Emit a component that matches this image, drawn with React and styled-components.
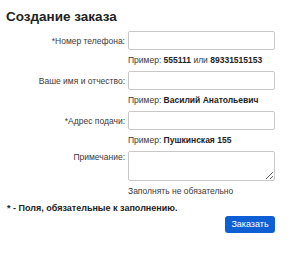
import React from 'react'
import styled, { createGlobalStyle } from 'styled-components'

const GlobalStyle = createGlobalStyle`
body {
  margin: 0;
  background: #fff;
  font-family: "Liberation Sans", Arial, sans-serif;
  color: #333;
}
`

const Page = styled.div`
width: 300px;
padding: 9px 6px 0 6px;
box-sizing: border-box;
`

const Title = styled.h1`
margin: 0 0 6px 0;
font-size: 13.5px;
line-height: 16px;
font-weight: bold;
color: #222;
`

const Form = styled.form`
display: grid;
grid-template-columns: 119px 147px;
column-gap: 3px;
align-items: start;
`

const Label = styled.label`
font-size: 8.5px;
color: #3a3a3a;
display: flex;
justify-content: flex-end;
text-align: right;
height: ${props => props.tall ? '30px' : '19px'};
align-items: ${props => props.tall ? 'flex-start' : 'center'};
padding-top: ${props => props.tall ? '1px' : '0'};
box-sizing: border-box;
line-height: 10px;
`

const Field = styled.div`
display: flex;
flex-direction: column;
`

const Input = styled.input`
box-sizing: border-box;
width: 147px;
height: 19px;
margin: 0;
border: 1px solid #c8c8c8;
border-radius: 2px;
padding: 1px 4px;
font-size: 9px;
font-family: inherit;
`

const Area = styled.textarea`
box-sizing: border-box;
width: 147px;
height: 30px;
margin: 0;
border: 1px solid #c8c8c8;
border-radius: 2px;
padding: 2px 4px;
font-size: 9px;
font-family: inherit;
display: block;
`

const Hint = styled.div`
font-size: 8.5px;
line-height: 13px;
padding-top: 4px;
margin-bottom: 4px;
color: #3a3a3a;
white-space: nowrap;
`

const Strong = styled.b`
color: #222;
`

const Note = styled.div`
grid-column: 1 / span 2;
font-size: 9px;
line-height: 13px;
font-weight: bold;
color: #222;
padding-left: 1px;
`

const Actions = styled.div`
grid-column: 1 / span 2;
display: flex;
justify-content: flex-end;
padding-top: 1px;
`

const Button = styled.button`
height: 17px;
width: 50px;
padding: 0;
border: none;
border-radius: 3px;
background: #0d5fd3;
color: #fff;
font-size: 9px;
font-family: inherit;
line-height: 17px;
`

const fields = [
  { label: '*Номер телефона:', hint: <>Пример: <Strong>555111</Strong> или <Strong>89331515153</Strong></> },
  { label: 'Ваше имя и отчество:', hint: <>Пример: <Strong>Василий Анатольевич</Strong></> },
  { label: '*Адрес подачи:', hint: <>Пример: <Strong>Пушкинская 155</Strong></> },
  { label: 'Примечание:', hint: 'Заполнять не обязательно', area: true }
]

export default function App () {
  return (
    <Page>
      <GlobalStyle />
      <Title>Создание заказа</Title>
      <Form onSubmit={e => e.preventDefault()}>
        {fields.map((f, i) => (
          <React.Fragment key={i}>
            <Label tall={f.area}>{f.label}</Label>
            <Field>
              {f.area ? <Area /> : <Input type='text' />}
              <Hint>{f.hint}</Hint>
            </Field>
          </React.Fragment>
        ))}
        <Note>* - Поля, обязательные к заполнению.</Note>
        <Actions>
          <Button type='submit'>Заказать</Button>
        </Actions>
      </Form>
    </Page>
  )
}
